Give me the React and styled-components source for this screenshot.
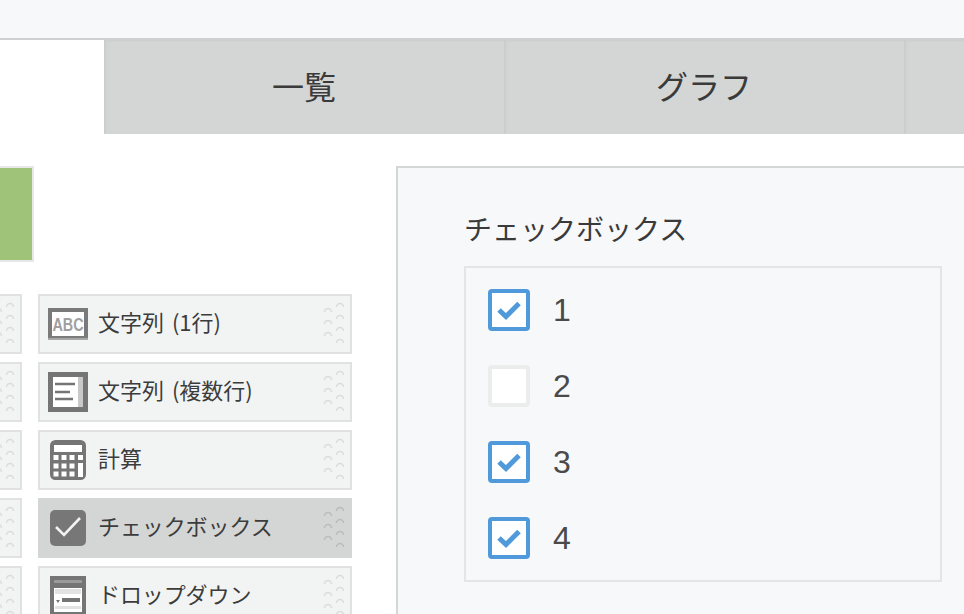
import React from 'react';
import styled, { createGlobalStyle } from 'styled-components';

const GlobalStyle = createGlobalStyle`
	html, body {
		margin: 0;
		padding: 0;
		background: #fff;
		overflow: hidden;
	}
	body {
		font-family: "Noto Sans CJK JP", "Noto Sans", sans-serif;
		color: #333;
	}
`;

const Page = styled.div`
	width: 964px;
	height: 614px;
	overflow: hidden;
`;
const Header = styled.div`
	height: 38px;
	background: #f7f8fa;
	border-bottom: 2px solid #cdd0d0;
`;
const Tabs = styled.div`
	display: flex;
	height: 94px;
	padding-left: 104px;
`;
const Tab = styled.div`
	flex: 0 0 ${(p) => p.$width}px;
	box-sizing: border-box;
	display: flex;
	align-items: center;
	justify-content: center;
	padding-bottom: 4px;
	background: #d4d6d5;
	box-shadow: inset 4px 0 3px -2px #c8cccc, inset 0 2px 2px -1px #cbcfcf;
	font-size: 32px;
	color: #3a3a3a;
`;
const Content = styled.div`
	display: flex;
	align-items: flex-start;
	gap: 44px;
	margin-top: 32px;
	margin-left: -296px;
`;
const Palette = styled.div`
	flex: 0 0 648px;
`;
const GreenBlock = styled.div`
	box-sizing: border-box;
	width: 330px;
	height: 96px;
	background: #9fc378;
	border: 2px solid #e6e8e8;
	margin-bottom: 32px;
`;
const ItemGrid = styled.div`
	display: grid;
	grid-template-columns: 318px 314px;
	column-gap: 16px;
	row-gap: 8px;
`;
const Item = styled.div`
	box-sizing: border-box;
	height: 60px;
	display: flex;
	align-items: center;
	gap: 10px;
	padding: 0 6px 0 8px;
	background: ${(p) => (p.$active ? '#d4d6d5' : '#f2f4f3')};
	border: 2px solid ${(p) => (p.$active ? '#d4d6d5' : '#dfe2e1')};
	font-size: 22px;
	color: #3c3c3c;
	white-space: nowrap;
`;
const IconSlot = styled.div`
	flex: none;
	width: 40px;
	display: flex;
	align-items: center;
	justify-content: center;
`;
const ItemLabel = styled.span`
	flex: 1;
	padding-bottom: 6px;
	word-spacing: 3px;
	letter-spacing: ${(p) => (p.$kana ? '-0.1px' : '0')};
`;
const Grip = styled.svg`
	flex: none;
	width: 24px;
	height: 50px;
`;
const Panel = styled.div`
	flex: 0 0 700px;
	box-sizing: border-box;
	height: 520px;
	padding: 40px 0 0 66px;
	background: #f7f8fa;
	border: 2px solid #d4d7d7;
`;
const Title = styled.div`
	font-size: 28px;
	line-height: 40px;
	color: #3a3a3a;
	margin-bottom: 18px;
`;
const OptionsBox = styled.div`
	box-sizing: border-box;
	width: 478px;
	height: 316px;
	padding: 4px 22px;
	border: 2px solid #e3e6e8;
`;
const Option = styled.div`
	height: 76px;
	display: flex;
	align-items: center;
	gap: 23px;
	font-family: "Liberation Sans", sans-serif;
	font-size: 32px;
	color: #4a4a4a;
`;
const CheckBox = styled.div`
	box-sizing: border-box;
	width: 42px;
	height: 42px;
	flex: none;
	display: flex;
	align-items: center;
	justify-content: center;
	background: #fff;
	border: 4px solid ${(p) => (p.$checked ? '#5099da' : '#ebecec')};
	border-radius: 4px;
`;

const GripIcon = ({ active }) => {
	const color = active ? '#b9bcbb' : '#dadddc';
	const dots = [
		[8, 10], [8, 22], [8, 34], [20, 5], [20, 17], [20, 29], [20, 41],
	];
	return (
		<Grip viewBox="0 0 24 50">
			{dots.map(([x, y]) => (
				<path
					key={`${x}-${y}`}
					d={`M${x - 3.5} ${y + 3}a3.5 3.5 0 0 1 7 0`}
					fill="none"
					stroke={color}
					strokeWidth="1.6"
				/>
			))}
		</Grip>
	);
};

const AbcIcon = () => (
	<svg width="40" height="32" viewBox="0 0 40 32">
		<rect x="2" y="2" width="36" height="28" fill="#fff" stroke="#7a7a7a" strokeWidth="4" />
		<rect y="30" width="40" height="2" fill="#a8a8a8" />
		<text transform="translate(20 23) scale(0.8 1)" textAnchor="middle" fontFamily="Liberation Sans, sans-serif" fontSize="18" fontWeight="700" fill="#a0a0a0">ABC</text>
	</svg>
);
const TextAreaIcon = () => (
	<svg width="40" height="40" viewBox="0 0 40 40">
		<rect x="2.5" y="2.5" width="35" height="35" fill="#fff" stroke="#757575" strokeWidth="5" />
		<rect x="30" y="5" width="5" height="30" fill="#c9c9c9" />
		<path d="M7 12h20M7 20h15M7 27h18" stroke="#757575" strokeWidth="2.6" fill="none" />
	</svg>
);
const CalcIcon = () => (
	<svg width="36" height="40" viewBox="0 0 36 40">
		<rect x="1.5" y="1.5" width="33" height="37" rx="4" fill="#757575" stroke="#757575" strokeWidth="3" />
		<rect x="4" y="5" width="28" height="7" fill="#fff" />
		<g fill="#fff">
			{[6, 14, 22].map((x) =>
				[17.5, 26, 34].map((y) => <rect key={`${x}-${y}`} x={x - 2.5} y={y - 2.5} width="5" height="5" />)
			)}
			<rect x="28" y="15" width="5" height="5" />
			<rect x="28" y="23" width="5" height="14" />
		</g>
	</svg>
);
const CheckIcon = () => (
	<svg width="36" height="36" viewBox="0 0 36 36">
		<rect width="36" height="36" rx="5" fill="#777" />
		<path d="M6 17l8 8L30 8" stroke="#f2f2f2" strokeWidth="2.6" fill="none" />
	</svg>
);
const DropdownIcon = () => (
	<svg width="36" height="40" viewBox="0 0 36 40">
		<rect width="36" height="40" fill="#757575" />
		<rect x="4" y="4" width="28" height="3" fill="#9a9a9a" />
		<rect x="4" y="12" width="28" height="24" fill="#fff" />
		<rect x="5" y="13" width="26" height="5" fill="#e2e2e2" />
		<rect x="5" y="30" width="26" height="3" fill="#e2e2e2" />
		<rect x="12" y="22" width="18" height="4" fill="#757575" />
		<path d="M6 24h4l-2 3z" fill="#757575" />
	</svg>
);

const items = [
	{ label: '文字列 (1行)', Icon: AbcIcon },
	{ label: '文字列 (複数行)', Icon: TextAreaIcon },
	{ label: '計算', Icon: CalcIcon },
	{ label: 'チェックボックス', Icon: CheckIcon, active: true, kana: true },
	{ label: 'ドロップダウン', Icon: DropdownIcon, kana: true },
];
const options = [
	{ label: '1', checked: true },
	{ label: '2', checked: false },
	{ label: '3', checked: true },
	{ label: '4', checked: true },
];

const App = () => (
	<Page>
		<GlobalStyle />
		<Header />
		<Tabs>
			<Tab $width={400}>一覧</Tab>
			<Tab $width={400}>グラフ</Tab>
			<Tab $width={60} />
		</Tabs>
		<Content>
			<Palette>
				<GreenBlock />
				<ItemGrid>
					{items.map(({ label, Icon, active, kana }) => (
						<React.Fragment key={label}>
							<Item>
								<ItemLabel />
								<GripIcon />
							</Item>
							<Item $active={active}>
								<IconSlot>
									<Icon />
								</IconSlot>
								<ItemLabel $kana={kana}>{label}</ItemLabel>
								<GripIcon active={active} />
							</Item>
						</React.Fragment>
					))}
				</ItemGrid>
			</Palette>
			<Panel>
				<Title>チェックボックス</Title>
				<OptionsBox>
					{options.map((option) => (
						<Option key={option.label}>
							<CheckBox $checked={option.checked}>
								{option.checked && (
									<svg width="26" height="20" viewBox="0 0 26 20">
										<path d="M3 10l7 6.5L23 3.5" stroke="#5099da" strokeWidth="5" fill="none" />
									</svg>
								)}
							</CheckBox>
							{option.label}
						</Option>
					))}
				</OptionsBox>
			</Panel>
		</Content>
	</Page>
);

export default App;
